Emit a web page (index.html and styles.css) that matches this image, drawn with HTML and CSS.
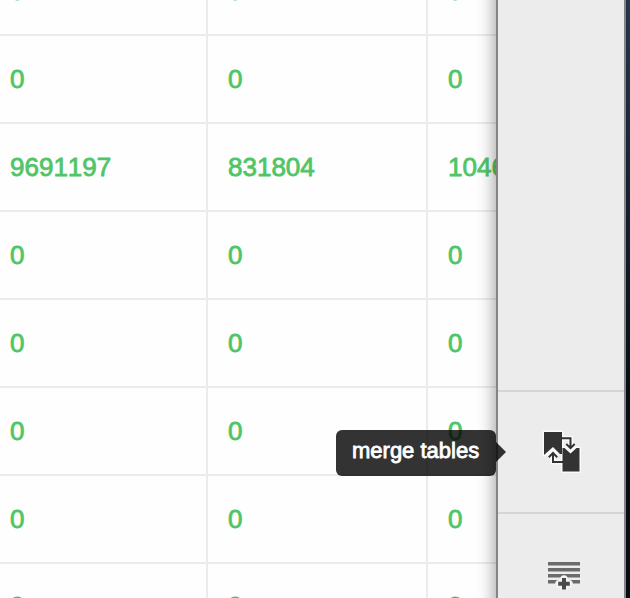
FILE: index.html
```html
<!DOCTYPE html>
<html lang="en">
<head>
<meta charset="utf-8">
<title>Tables</title>
<link rel="stylesheet" href="styles.css">
</head>
<body>
<div class="app">
  <main class="sheet">
    <div class="row"><span class="cell">0</span><span class="cell">0</span><span class="cell">0</span></div>
    <div class="row"><span class="cell">0</span><span class="cell">0</span><span class="cell">0</span></div>
    <div class="row"><span class="cell">9691197</span><span class="cell">831804</span><span class="cell">1046</span></div>
    <div class="row"><span class="cell">0</span><span class="cell">0</span><span class="cell">0</span></div>
    <div class="row"><span class="cell">0</span><span class="cell">0</span><span class="cell">0</span></div>
    <div class="row"><span class="cell">0</span><span class="cell">0</span><span class="cell">0</span></div>
    <div class="row"><span class="cell">0</span><span class="cell">0</span><span class="cell">0</span></div>
    <div class="row last"><span class="cell">0</span><span class="cell">0</span><span class="cell">0</span></div>
  </main>
  <aside class="panel">
    <div class="spacer"></div>
    <div class="tool merge">
      <svg width="44" height="48" viewBox="0 0 44 48">
        <path class="glow" d="M4 4h18v21l-9-3-9 5zM22.500 20H39.500v23.500H22.500z"/>
        <path d="M4 4h18v22h-2l-7-7-9 8z" fill="#333"/>
        <path class="halo" d="M22 10.300h8.500v9.500M26.500 16.300l4 4 4-4M23 34H13v-9M9 29l4-4 4 4"/>
        <path d="M22.500 20h2l6 5.500 6-5.500h3v23.500h-17z" fill="#333"/>
        <path class="arrows" d="M22 10.300h8.500v9.500M26.300 16l4.200 4.200 4.200-4.200M23 34H13v-9M8.800 29.200l4.200-4.200 4.200 4.200"/>
      </svg>
      <div class="tooltip">merge tables</div>
    </div>
    <div class="tool add">
      <svg width="36" height="30" viewBox="0 0 36 30">
        <path d="M2 3.800h32M2 9.800h32M2 15.800h32M2 21.800h32" stroke="#6b6b6b" stroke-width="3.600"/>
        <path d="M18 19v10M13 23.800h10" stroke="#f4f4f4" stroke-width="7.500" stroke-linecap="round"/>
        <path d="M18 18v11.500M12.200 23.800h11.600" stroke="#4a4a4a" stroke-width="4"/>
      </svg>
    </div>
  </aside>
  <div class="desktop"></div>
</div>
</body>
</html>
```
FILE: styles.css
```css
* { box-sizing: border-box; }
body { margin: 0; overflow: hidden; font-family: "Liberation Sans", Arial, sans-serif; }
.app { display: flex; width: 630px; height: 598px; overflow: hidden; }
.sheet {
  display: flex; flex: none; flex-direction: column;
  width: 496px; height: 668px; margin-top: -52px;
  overflow: hidden; background: #fefefe;
}
.row {
  display: grid; flex: none; grid-template-columns: 208px 220px 220px;
  width: 648px; height: 88px; border-bottom: 2px solid #ebebeb;
}
.cell {
  display: flex; align-items: center; padding-left: 20px;
  border-right: 2px solid #ebebeb; color: #50c566;
  font-size: 26px; font-kerning: none; -webkit-text-stroke: .8px #50c566;
}
.cell:first-child { padding-left: 10px; }
.row:first-child .cell { padding-top: 1px; }
.last .cell { padding-bottom: 1px; color: #49a85b; }
.panel {
  position: relative; display: flex; flex: none; flex-direction: column;
  width: 130px; height: 698px; margin-top: -50px; padding-top: 50px; background: #ececec;
  border-left: 2px solid #858585; border-right: 2px solid #858585;
  box-shadow: -1px 0 16px rgba(0, 0, 0, .4);
}
.spacer { flex: none; height: 390px; }
.tool { position: relative; display: flex; flex: none; height: 122px; justify-content: center; border-top: 2px solid #d5d5d5; }
.merge { padding: 36px 0 0 2px; }
.add { padding: 46px 0 0 6px; }
.tool svg { flex: none; }
.glow { fill: #fafafa; stroke: #fafafa; stroke-width: 3; stroke-linejoin: round; }
.halo, .arrows { fill: none; stroke: #fafafa; stroke-width: 5; }
.arrows { stroke: #333; stroke-width: 2; }
.tooltip {
  position: absolute; top: 38px; right: 128px; width: 160px; height: 46px;
  padding-left: 16px; border-radius: 6px; background: rgba(0, 0, 0, .8);
  color: #fff; font-size: 22px; line-height: 42px; white-space: nowrap;
  -webkit-text-stroke: .8px #fff;
}
.tooltip::after {
  content: ""; position: absolute; top: 12px; left: 100%;
  border: 10px solid transparent; border-right: 0; border-left-color: rgba(0, 0, 0, .8);
}
.desktop { flex: 1; background: linear-gradient(#2d4058, #1c2c40 25%, #081119 65%, #090e13); }
```
